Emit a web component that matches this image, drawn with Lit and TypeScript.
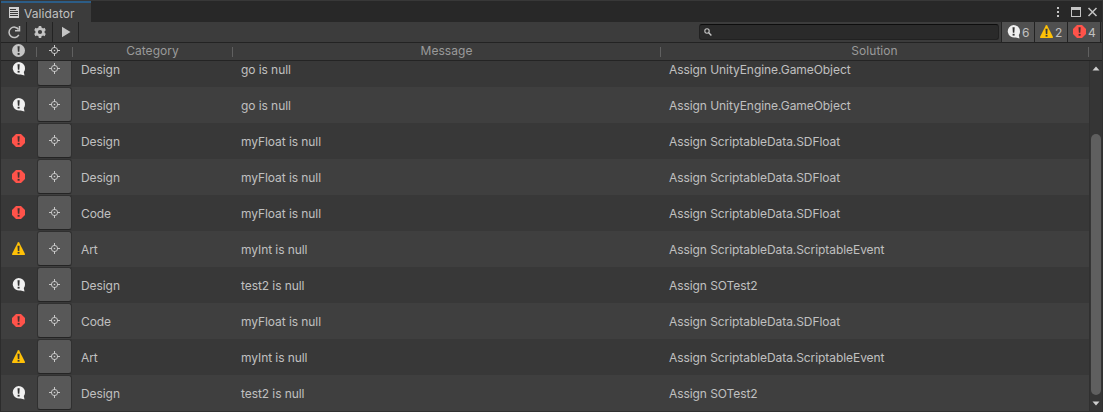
import { LitElement, html, css, svg } from "lit";
import { customElement, property } from "lit/decorators.js";

type Level = "info" | "warn" | "error" | "muted";

@customElement("level-icon")
class LevelIcon extends LitElement {
  @property() level: Level = "info";

  static styles = css`
    :host { display: block; width: 14px; height: 14px; }
    svg { display: block; }
  `;

  render() {
    const shapes = {
      muted: svg`<circle cx="6.500" cy="6.500" r="6.500" fill="#c4c4c4"/><path d="M5.500 2.300h2.200l-.4 5.500H5.900z" fill="#383838"/><rect x="5.600" y="9" width="2" height="1.900" fill="#383838"/>`,
      info: svg`<path d="M6.500 0a6.500 6.300 0 0 1 6.500 6.300c0 1.800-.5 3-1.200 3.800L12.500 13.400 8.700 12.400A6.500 6.300 0 1 1 6.500 0z" fill="#f0f0f0"/><path d="M5.500 2.300h2.200l-.4 5.500H5.900z" fill="#303030"/><rect x="5.600" y="8.800" width="2" height="1.800" fill="#303030"/>`,
      warn: svg`<path d="M5.800 .6Q6.500-.4 7.200 .6L13 12Q13.200 13 12.300 13H.7Q-.2 13 0 12z" fill="#ffc107"/><path d="M5.500 3.800h2.100l-.3 5.200H5.800z" fill="#383838"/><rect x="5.600" y="9.900" width="1.900" height="1.700" fill="#383838"/>`,
      error: svg`<path d="M4 0h5l4 4v5l-4 4H4L0 9V4z" fill="#ff534a"/><path d="M5.500 2.300h2.200l-.4 5.500H5.900z" fill="#443030"/><rect x="5.600" y="8.900" width="2" height="1.800" fill="#443030"/>`,
    };
    return html`<svg width="14" height="14" viewBox="0 0 14 14">${shapes[this.level]}</svg>`;
  }
}

const target = html`<svg width="11" height="11" viewBox="0 0 11 11" fill="none" stroke="#c8c8c8">
  <circle cx="5.500" cy="5.500" r="3.100"/><path d="M5.500 0v3M5.500 8v3M0 5.500h3M8 5.500h3"/>
  <circle cx="5.500" cy="5.500" r=".8" fill="#c8c8c8" stroke="none"/></svg>`;

const FLOAT = "Assign ScriptableData.SDFloat";
const EVENT = "Assign ScriptableData.ScriptableEvent";
const GO = "Assign UnityEngine.GameObject";
const rows: [Level, string, string, string][] = [
  ["info", "Design", "go is null", GO],
  ["info", "Design", "go is null", GO],
  ["error", "Design", "myFloat is null", FLOAT],
  ["error", "Design", "myFloat is null", FLOAT],
  ["error", "Code", "myFloat is null", FLOAT],
  ["warn", "Art", "myInt is null", EVENT],
  ["info", "Design", "test2 is null", "Assign SOTest2"],
  ["error", "Code", "myFloat is null", FLOAT],
  ["warn", "Art", "myInt is null", EVENT],
  ["info", "Design", "test2 is null", "Assign SOTest2"],
];

@customElement("app-root")
class AppRoot extends LitElement {
  static styles = css`
    :host {
      display: flex; flex-direction: column; box-sizing: border-box;
      width: 1103px; height: 412px; overflow: hidden;
      background: #383838; border: 1px solid #303030; border-top-color: #383838;
      border-left-color: #2c2c2c;
      color: #c0c0c0; font: 12px/16px Inter, "Liberation Sans", sans-serif;
    }
    * { box-sizing: border-box; }
    svg { display: block; flex: none; }
    .tabs { display: flex; height: 21px; flex: none; background: #282828; padding-right: 4px; }
    .tab {
      display: flex; align-items: center; width: 90px; padding: 2px 0 0 8px; gap: 5px;
      background: #3c3c3c; border-top: 2px solid #2c5d87; letter-spacing: 0.1px;
    }
    .tab svg { margin-top: -2px; }
    .controls { display: flex; align-items: center; margin-left: auto; }
    .toolbar {
      display: flex; height: 21px; flex: none; background: #3c3c3c;
      border-bottom: 1px solid #232323; padding-right: 1px;
    }
    .tool {
      display: flex; align-items: center; justify-content: center;
      width: 26px; border-right: 1px solid #232323;
    }
    .search {
      display: flex; align-items: center; width: 300px; height: 16px; margin: 2px 2px 0 auto;
      padding-left: 4px; background: #2a2a2a; border: 1px solid #212121; border-top-color: #0d0d0d;
      border-radius: 3px;
    }
    .count {
      display: flex; align-items: center; width: 33px; padding-left: 5px; gap: 1px;
      background: #505050; border-left: 1px solid #232323;
    }
    .count:last-child { width: 34px; border-right: 1px solid #232323; }
    .count span { padding-top: 1px; }
    .head {
      display: flex; align-items: center; height: 18px; flex: none; background: #3c3c3c;
      padding-bottom: 2px; border-bottom: 1px solid #242424; color: #9a9a9a; letter-spacing: 0.04px;
    }
    .h { display: flex; align-items: center; justify-content: center; height: 15px; }
    .sep { width: 1px; height: 10px; background: #606060; flex: none; margin-top: 2px; }
    .h-level { width: 35px; padding-top: 1px; }
    .h-target { width: 35px; }
    .h-cat { width: 159px; }
    .h-msg { width: 427px; }
    .h-sol { width: 427px; }
    .body { display: flex; flex: 1; min-height: 0; }
    .rows {
      display: flex; flex-direction: column; justify-content: flex-end; width: 1088px;
      overflow: hidden; letter-spacing: -0.07px;
    }
    .row { display: flex; align-items: center; height: 36px; flex: none; background: #383838; }
    .row:nth-child(even) { background: #3f3f3f; }
    .level { width: 36px; padding-left: 11px; }
    .select {
      display: flex; align-items: center; justify-content: center; width: 35px; height: 35px;
      margin: 0 1px 1px 0; background: #585858; border: 1px solid #303030; border-bottom-color: #242424;
      border-radius: 3px;
    }
    .cat { width: 160px; padding-left: 8px; }
    .msg { width: 428px; padding-left: 8px; }
    .sol { padding-left: 8px; }
    .cat, .msg, .sol { padding-top: 1px; white-space: nowrap; }
    .scroll {
      display: flex; flex-direction: column; align-items: center; justify-content: space-between;
      width: 13px; padding: 5px 0; background: #353535; border-left: 1px solid #303030;
    }
    .thumb { width: 10px; height: 261px; margin: 57px 0 0; border-radius: 5px; background: #5f5f5f; }
  `;

  render() {
    return html`
      <div class="tabs">
        <div class="tab">
          <svg width="10" height="11" viewBox="0 0 10 11"><path d="M0 0h10v11H0z" fill="#d0d0d0"/><path d="M1 2.500h6M1 4.500h8M1 6.500h8M1 8.500h8" stroke="#383838"/></svg>
          <span>Validator</span>
        </div>
        <div class="controls">
          <svg width="45" height="12" viewBox="0 0 45 12"><path d="M4 1h2v2H4zM4 5h2v2H4zM4 9h2v2H4zM18 1h10v10H18z M19 4v6h8V4z" fill="#c4c4c4" fill-rule="evenodd"/><path d="M35.500 2l8 8M43.500 2l-8 8" stroke="#c4c4c4" stroke-width="1.500"/></svg>
        </div>
      </div>
      <div class="toolbar">
        <div class="tool"><svg width="14" height="14" viewBox="0 0 14 14" fill="none" stroke="#c4c4c4" stroke-width="1.500"><path d="M11.800 9.800A5.200 5.200 0 1 1 11.600 4.500"/><path d="M12.500 1v4.700H8"/></svg></div>
        <div class="tool"><svg width="14" height="14" viewBox="0 0 14 14" fill="none" stroke="#c4c4c4"><circle cx="7" cy="7" r="3.400" stroke-width="2.600"/><path d="M7 1v2M7 11v2M1.800 4l1.800 1M10.400 9l1.800 1M1.800 10l1.800-1M10.400 5l1.800-1" stroke-width="2.600"/></svg></div>
        <div class="tool"><svg width="10" height="12" viewBox="0 0 10 12"><path d="M1 .8L9.500 6 1 11.200z" fill="#c4c4c4"/></svg></div>
        <div class="search"><svg width="8" height="8" viewBox="0 0 8 8" fill="none" stroke="#c4c4c4"><circle cx="3" cy="3" r="2.200" stroke-width="1.100"/><path d="M4.700 4.700L7.400 7.400" stroke-width="1.400"/></svg></div>
        <div class="count"><level-icon level="info"></level-icon><span>6</span></div>
        <div class="count"><level-icon level="warn"></level-icon><span>2</span></div>
        <div class="count"><level-icon level="error"></level-icon><span>4</span></div>
      </div>
      <div class="head">
        <div class="h h-level"><level-icon level="muted"></level-icon></div><i class="sep"></i>
        <div class="h h-target">${target}</div><i class="sep"></i>
        <div class="h h-cat">Category</div><i class="sep"></i>
        <div class="h h-msg">Message</div><i class="sep"></i>
        <div class="h h-sol">Solution</div><i class="sep"></i>
      </div>
      <div class="body">
        <div class="rows">
          ${rows.map(([level, cat, msg, sol]) => html`
            <div class="row">
              <div class="level"><level-icon level=${level}></level-icon></div>
              <div class="select">${target}</div>
              <div class="cat">${cat}</div>
              <div class="msg">${msg}</div>
              <div class="sol">${sol}</div>
            </div>`)}
        </div>
        <div class="scroll">
          <svg width="8" height="5" viewBox="0 0 8 5"><path d="M.5 4.500L4 .5l3.500 4z" fill="#d0d0d0"/></svg>
          <div class="thumb"></div>
          <svg width="8" height="5" viewBox="0 0 8 5"><path d="M.5 .5L4 4.500 7.500 .5z" fill="#d0d0d0"/></svg>
        </div>
      </div>`;
  }
}
